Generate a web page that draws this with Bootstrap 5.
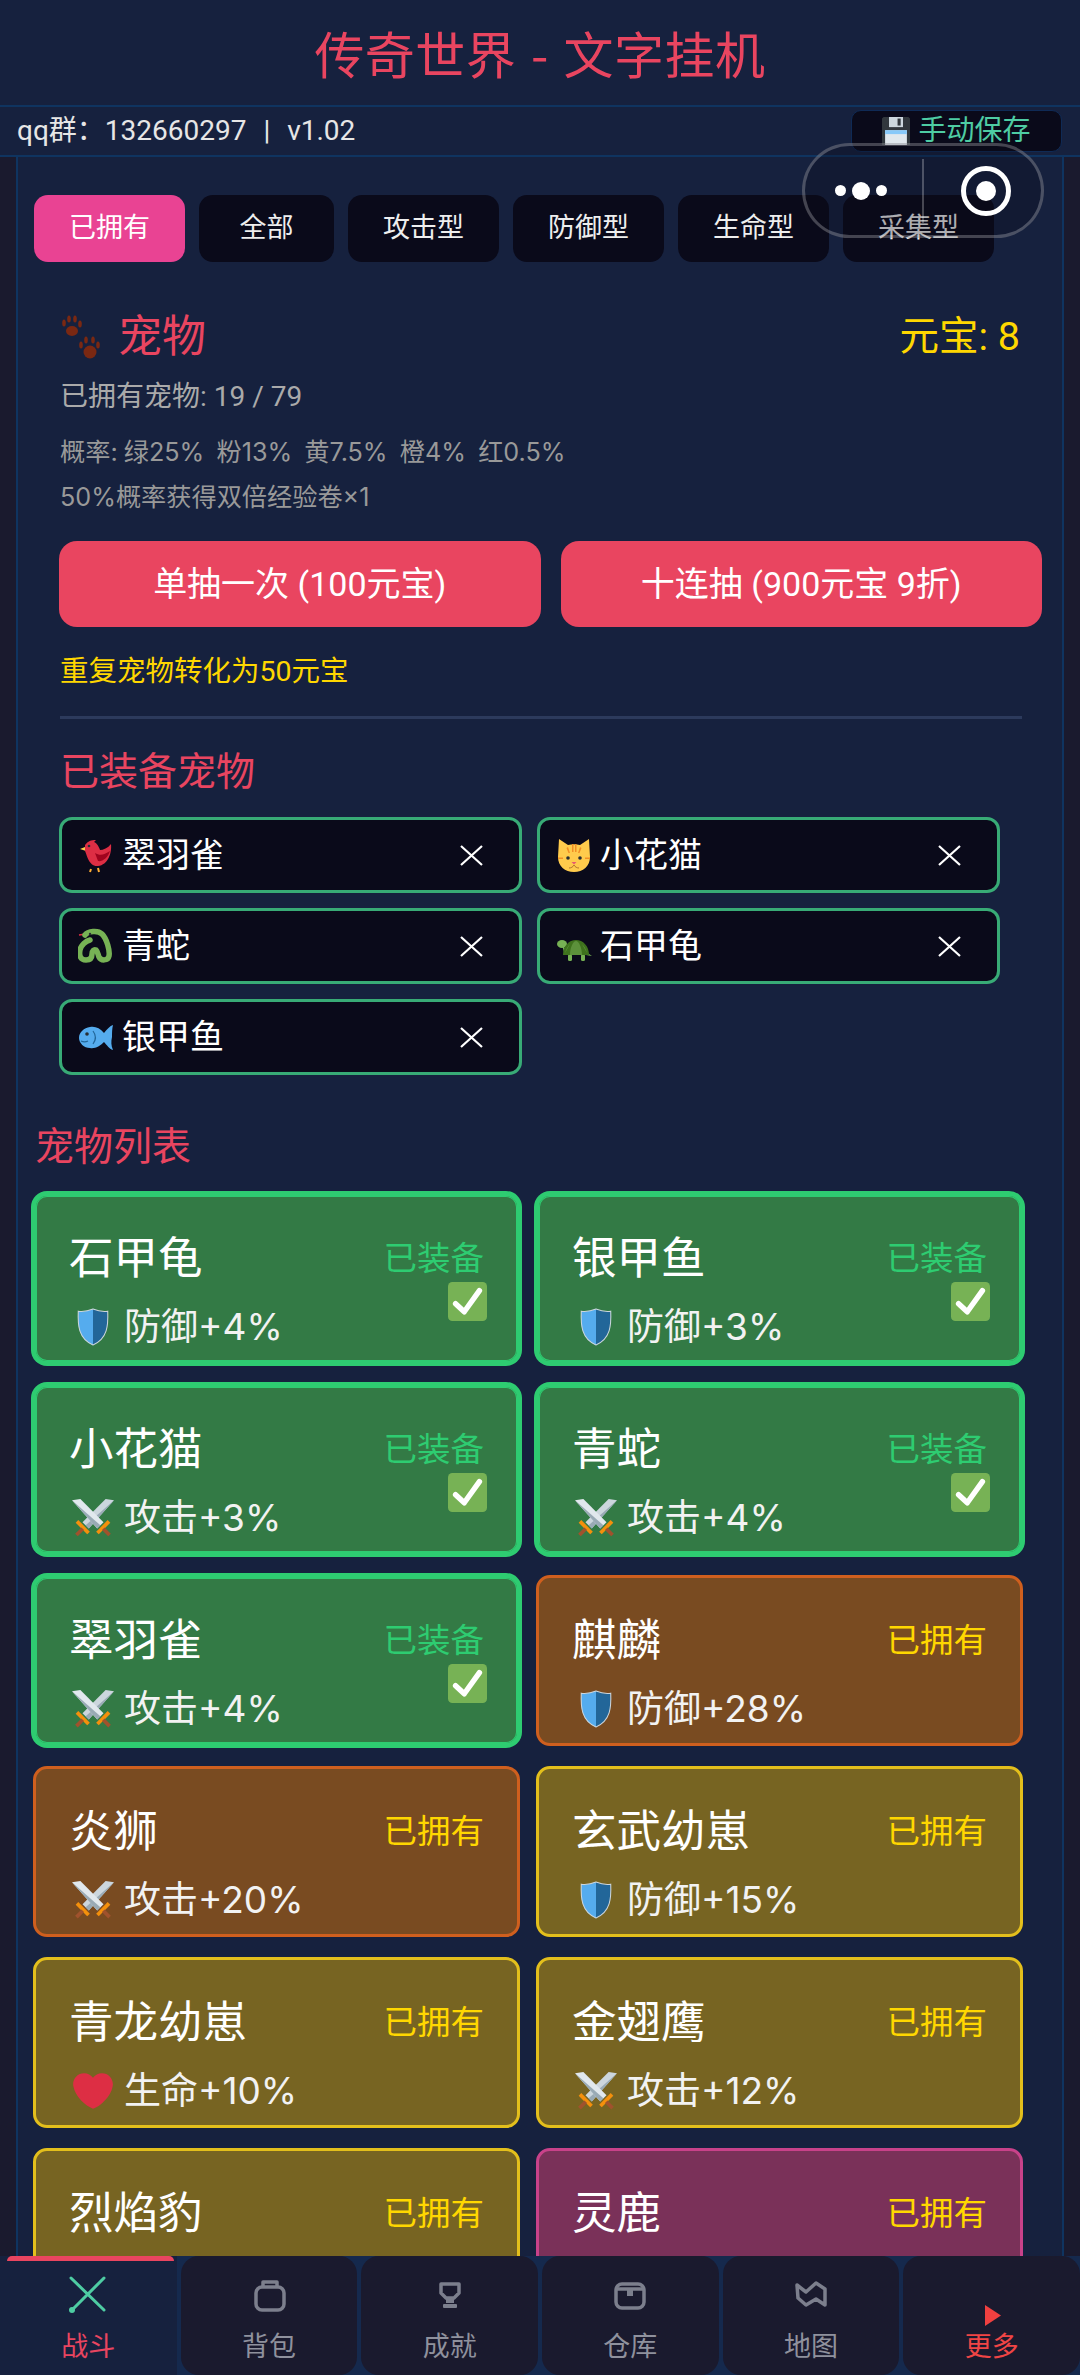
<!DOCTYPE html>
<html lang="zh-CN">
<head>
<meta charset="UTF-8">
<meta name="viewport" content="width=device-width, initial-scale=1.0">
<title>传奇世界 - 文字挂机</title>
<link href="https://cdn.jsdelivr.net/npm/bootstrap@5.3.0/dist/css/bootstrap.min.css" rel="stylesheet">
<style>
body { height: 2375px; background: #1a1a2e; color: #eee; font-family: Roboto, "Noto Sans CJK SC", sans-serif; position: relative; }

.game-title { height: 105px; margin: 0; background: #16213e; color: #e94560; font-size: 50px; font-weight: 400; line-height: 105px; letter-spacing: .5px; word-spacing: 3px; text-align: center; font-family: "Noto Sans CJK SC", sans-serif; }
.info-bar { height: 52px; padding: 2px 18px 2px 17px; background: #16213e; border-top: 2px solid #0f3460; border-bottom: 2px solid #0f3460; font-size: 28px; word-spacing: 10px; color: #e6e6e6; }
.save-btn { width: 211px; height: 42px; padding: 0; background: #0a0a1a; border: 1px solid #0f2a55; border-radius: 10px; color: #4ecca3; font-size: 28px; }
.save-btn svg { width: 28px; height: 28px; }

.game-main { margin: 0 16px; padding: 38px 16px 0; background: #16213e; border-left: 2px solid #0f3460; border-right: 2px solid #0f3460; min-height: 0; }
.tab-row { gap: 14px; }
.pet-tab { min-width: 135px; height: 67px; padding: 0 35px; background: #0a0a1a; border: 0; border-radius: 14px; color: #eee; font-size: 27px; }
.pet-tab.picked { background: #e94393; color: #fff; }

.gacha-box { padding-left: 26px; margin-top: 50px; }
.gacha-head { height: 50px; width: 962px; }
.gacha-title { color: #e94560; font-size: 44px; line-height: 50px; }
.gacha-title svg { width: 44px; height: 46px; margin-right: 14px; }
.gold-text { color: #ffd700; font-size: 39.500px; line-height: 50px; margin-right: 2px; }
.owned-count { margin-top: 15px; font-size: 28px; line-height: 40px; color: #aaa; }
.rate-text { margin-top: 13px; font-family: Inter, "Noto Sans CJK SC", sans-serif; font-size: 25.200px; line-height: 45px; word-spacing: -1px; color: #999; }
.draw-row { margin: 21px 0 0 -1px; width: 983px; gap: 20px; }
.draw-btn { height: 86px; background: #e94560; border: 0; border-radius: 18px; color: #fff; font-size: 34px; padding: 0; }
.dup-note { margin-top: 25px; color: #ffd700; font-size: 28.500px; line-height: 40px; }
.gacha-line { width: 962px; height: 3px; margin: 24px 0 0; border: 0; background: #2c3a5c; opacity: 1; }
.sec-title { color: #e94560; font-size: 39px; line-height: 50px; margin: 0; font-weight: 400; }
.gacha-box .sec-title { margin-top: 28px; }
.equip-grid { display: grid; grid-template-columns: 463px 463px; gap: 15px; margin: 20px 0 0 -1px; }
.equip-chip { height: 76px; padding: 0 36px 0 16px; background: #0a0a1a; border: 3px solid #38ab76; border-radius: 13px; font-size: 34px; color: #fff; }
.equip-chip svg { width: 36px; height: 36px; margin-right: 8px; }
.equip-chip .chip-x { width: 23px; height: 21px; margin: 0 0 0 auto; }

.list-title { margin: 47px 0 0 1px; }
.pet-grid { display: grid; grid-template-columns: 487px 487px; gap: 20px 16px; margin: 21px 0 0 -1px; }
.pet-item { height: 171px; padding: 38px 33px 0 33px; border: 3px solid; border-radius: 14px; }
.pet-name { font-size: 44.500px; line-height: 50px; color: #fff; }
.pet-stat { margin-top: 18px; font-family: Inter, "Noto Sans CJK SC", sans-serif; font-size: 37px; line-height: 50px; color: #f2f2f2; }
.pet-stat svg { width: 42px; height: 40px; margin: 0 10px 0 3px; }
.pet-state { font-size: 33.500px; line-height: 50px; text-align: right; color: #ffd700; }
.pet-check { display: block; width: 39px; height: 39px; margin: -2px -3px 0 auto; }
.pet-on { background: #337a45; border-color: #2ecc71; box-shadow: 0 0 0 2px #2ecc71, inset 0 0 0 1px #2ecc71; }
.pet-on .pet-state { color: #2ecc71; }
.pet-orange { background: #794b21; border-color: #cf5f1e; }
.pet-yellow { background: #776422; border-color: #e3bf1c; }
.pet-pink { background: #7a3159; border-color: #c8428a; }

.bottom-tabs { height: 119px; gap: 4px; background: #15294d; flex-shrink: 0; }
.bottom-tab { flex: 1 1 0; background: #1a1a2e; border-radius: 18px; padding-top: 19px; color: #8f919d; font-size: 27px; line-height: 34px; text-align: center; }
.bottom-tab svg { display: block; width: 40px; height: 55px; margin: 0 auto; }
.bottom-tab.on { background: #16213e; padding-top: 0; color: #e94560; border-radius: 0; }
.bottom-tab.on .tab-bar { height: 5px; margin: 0 3px 14px 7px; background: #e94560; border-radius: 16px 16px 0 0; }
.bottom-tab.more { color: #f04545; }
.tab-ico { fill: none; stroke: #7c7f8d; stroke-width: 3.500; stroke-linejoin: round; }

.mp-capsule { position: absolute; left: 802px; top: 143px; width: 242px; height: 95px; border: 3px solid rgba(255,255,255,.24); border-radius: 48px; background: rgba(10,10,26,.28); }
.mp-dots { width: 117px; padding-left: 30px; gap: 6px; }
.mp-dot { width: 11px; height: 11px; background: #fff; border-radius: 50%; }
.mp-dot.big { width: 18px; height: 18px; }
.mp-split { width: 2px; height: 64px; background: rgba(255,255,255,.25); }
.mp-ring { width: 50px; height: 50px; margin-left: 37px; border: 5px solid #fff; border-radius: 50%; }
.mp-ring span { width: 20px; height: 20px; background: #fff; border-radius: 50%; }
</style>
</head>
<body class="d-flex flex-column overflow-hidden">

<svg class="d-none">
  <symbol id="e-shield" viewBox="3 1 34 38">
    <path d="M20 3C15 5 10 5.500 6 5c-.5 13 0 26 14 32z" fill="#55acee"/>
    <path d="M20 3c5 2 10 2.500 14 2 .5 13 0 26-14 32z" fill="#226699"/>
    <path d="M20 3C15 5 10 5.500 6 5c-.5 13 0 26 14 32 14-6 14.500-19 14-32-4 .5-9 0-14-2z" fill="none" stroke="#ccd6dd" stroke-width="1"/>
  </symbol>
  <symbol id="e-swords" viewBox="0 0 40 36">
    <path d="M40 1l-8-1L10 22l6 6z" fill="#ccd6dd"/><path d="M40 1L13 25l3 3z" fill="#99aab5"/>
    <path d="M0 1l8-1 22 22-6 6z" fill="#e1e8ed"/><path d="M0 1l27 24-3 3z" fill="#99aab5"/>
    <path d="M6 20l11 11-2.500 2.500-11-11z" fill="#f4900c"/><path d="M9 27l-6 6 2.500 2.500 6-6z" fill="#a0522d"/>
    <path d="M34 20L23 31l2.500 2.500 11-11z" fill="#f4900c"/><path d="M31 27l6 6-2.500 2.500-6-6z" fill="#a0522d"/>
  </symbol>
  <symbol id="e-heart" viewBox="0 0 36 36">
    <path d="M35.900 11.800c0-5.450-4.400-9.870-9.870-9.870-3.300 0-6.230 1.630-8.030 4.130-1.790-2.500-4.710-4.130-8.020-4.130C4.540 1.930.120 6.350.120 11.800c0 .77.100 1.520.27 2.240C1.750 22.590 11.220 31.570 18 34.030c6.780-2.460 16.250-11.440 17.620-19.960.17-.72.280-1.470.28-2.270z" fill="#dd2e44"/>
  </symbol>
  <symbol id="e-check" viewBox="0 0 36 36">
    <rect width="36" height="36" rx="4" fill="#77b255"/>
    <path d="M7 20l8 7.500L29 8" fill="none" stroke="#fff" stroke-width="5" stroke-linecap="round" stroke-linejoin="round"/>
  </symbol>
  <symbol id="e-paw" viewBox="0 0 44 46">
    <g fill="#7a2812">
      <ellipse cx="12" cy="17" rx="6" ry="5"/><ellipse cx="4" cy="9" rx="1.800" ry="3.500"/><ellipse cx="9" cy="5" rx="1.800" ry="3.500"/><ellipse cx="15" cy="5" rx="1.800" ry="3.500"/><ellipse cx="20" cy="10" rx="1.800" ry="3.500"/>
      <ellipse cx="30" cy="38" rx="6.500" ry="6.500"/><ellipse cx="21" cy="31" rx="1.800" ry="3.500"/><ellipse cx="26" cy="26" rx="1.800" ry="3.500"/><ellipse cx="33" cy="26" rx="1.800" ry="3.500"/><ellipse cx="38" cy="31" rx="1.800" ry="3.500"/>
    </g>
  </symbol>
  <symbol id="e-floppy" viewBox="0 0 36 36">
    <path d="M2 0h32l2 2v34H0V2z" fill="#31373d"/>
    <rect x="9" y="0" width="18" height="13" fill="#ccd6dd"/><rect x="20" y="2" width="4" height="9" fill="#31373d"/>
    <rect x="4" y="17" width="28" height="19" fill="#e1e8ed"/><rect x="4" y="17" width="28" height="5" fill="#88c9f9"/>
  </symbol>
  <symbol id="e-bird" viewBox="0 0 36 36">
    <path d="M13 32l-1 3M20 31l1 4" stroke="#ffac33" stroke-width="2"/>
    <path d="M2 12l5-2 1 4z" fill="#ffcc4d"/>
    <path d="M7 8c3-4 6-5 11-5l-2 2c3 1 5 5 6 8 3 0 8-2 11-6 1 9-3 21-13 22C11 30 9 18 7 14z" fill="#dd2e44"/>
    <path d="M17 16c5 3 9 2 15-2-2 7-8 11-12 10z" fill="#a0041e"/>
    <circle cx="11" cy="9" r="1.300" fill="#292f33"/>
  </symbol>
  <symbol id="e-cat" viewBox="0 0 36 36">
    <path d="M3 2l9 6c4-1 8-1 12 0l9-6 1 18c0 9-7 15-16 15S2 29 2 20z" fill="#ffcb4c"/>
    <path d="M16 7h1.500v8H16zM19 7h1.500v8H19zM7 22H2v-1.500h5zM34 22h-5v-1.500h5z" fill="#f18f26"/>
    <path d="M12 10l2 6h-1.500l-2-5zM24 10l-2 6h1.500l2-5z" fill="#f18f26"/>
    <circle cx="12" cy="21" r="1.800" fill="#292f33"/><circle cx="24" cy="21" r="1.800" fill="#292f33"/>
    <path d="M15.500 25h5L18 27.500z" fill="#e75a70"/>
    <path d="M13 31c2 0 4-1 5-3 1 2 3 3 5 3" fill="none" stroke="#b2752a" stroke-width="1"/>
  </symbol>
  <symbol id="e-snake" viewBox="0 0 36 36">
    <path d="M1 7l7-1" stroke="#dd2e44" stroke-width="1.500"/>
    <path d="M7 7c3-4 13-5 17-1 5 5 8 17 7 22-1 5-8 5-10 1-1-2-1-5-3-7-2-1-4 1-4 4 0 4-2 6-6 6-6 0-7-5-6-10 1-5 6-9 10-10" fill="none" stroke="#77b255" stroke-width="5.500" stroke-linecap="round"/>
    <circle cx="12" cy="6" r="1.200" fill="#292f33"/>
  </symbol>
  <symbol id="e-turtle" viewBox="0 0 36 36">
    <rect x="12" y="26" width="4" height="7" rx="1.500" fill="#77b255"/><rect x="25" y="26" width="4" height="7" rx="1.500" fill="#77b255"/>
    <path d="M30 27l6 1-6-4z" fill="#77b255"/>
    <ellipse cx="6" cy="16" rx="5" ry="4" fill="#77b255"/><path d="M6 17l6 7h-4z" fill="#77b255"/>
    <path d="M7 27c0-9 6-15 13-15s13 6 13 15z" fill="#3e721d"/>
    <path d="M14 27c0-7 3-14 6-14s6 7 6 14zM9 25c1-4 3-7 5-9M31 25c-1-4-3-7-5-9" fill="#5c913b"/>
  </symbol>
  <symbol id="e-fish" viewBox="0 0 36 36">
    <path d="M35 6c-3 1-6 4-9 8-4-5-9-7-14-6C6 9 1 13 1 19c0 5 5 10 11 10 5 1 10-2 14-6 3 3 5 7 9 8-2-4-2-9-1-13 0-4 0-8 1-12z" fill="#55acee"/>
    <circle cx="9" cy="15" r="1.800" fill="#292f33"/>
    <path d="M15 12c3 4 3 9 0 13M3 22c2 1 5 1 7 0" fill="none" stroke="#226699" stroke-width="1.200"/>
  </symbol>
  <symbol id="e-x" viewBox="0 0 23 21">
    <path d="M1 1l21 19M22 1L1 20" stroke="#fff" stroke-width="2.200" fill="none"/>
  </symbol>
</svg>

<h1 class="game-title flex-shrink-0">传奇世界 - 文字挂机</h1>

<div class="info-bar d-flex justify-content-between align-items-center flex-shrink-0">
  <span>qq群：132660297 | v1.02</span>
  <button type="button" class="save-btn btn d-flex align-items-center justify-content-center gap-2"><svg><use href="#e-floppy"/></svg>手动保存</button>
</div>

<main class="game-main flex-grow-1 overflow-hidden">
  <div class="d-flex tab-row">
    <button type="button" class="btn pet-tab picked">已拥有</button>
    <button type="button" class="btn pet-tab">全部</button>
    <button type="button" class="btn pet-tab">攻击型</button>
    <button type="button" class="btn pet-tab">防御型</button>
    <button type="button" class="btn pet-tab">生命型</button>
    <button type="button" class="btn pet-tab">采集型</button>
  </div>

  <section class="gacha-box">
    <div class="gacha-head d-flex justify-content-between align-items-center">
      <div class="gacha-title d-flex align-items-center"><svg><use href="#e-paw"/></svg>宠物</div>
      <div class="gold-text">元宝: 8</div>
    </div>
    <div class="owned-count">已拥有宠物: 19 / 79</div>
    <div class="rate-text">概率: 绿25%&nbsp; 粉13%&nbsp; 黄7.5%&nbsp; 橙4%&nbsp; 红0.5%<br>50%概率获得双倍经验卷×1</div>
    <div class="draw-row d-flex">
      <button type="button" class="btn draw-btn flex-fill w-50">单抽一次 (100元宝)</button>
      <button type="button" class="btn draw-btn flex-fill w-50">十连抽 (900元宝 9折)</button>
    </div>
    <div class="dup-note">重复宠物转化为50元宝</div>
    <hr class="gacha-line">
    <h2 class="sec-title">已装备宠物</h2>
    <div class="equip-grid">
      <div class="equip-chip d-flex align-items-center"><svg><use href="#e-bird"/></svg>翠羽雀<svg class="chip-x"><use href="#e-x"/></svg></div>
      <div class="equip-chip d-flex align-items-center"><svg><use href="#e-cat"/></svg>小花猫<svg class="chip-x"><use href="#e-x"/></svg></div>
      <div class="equip-chip d-flex align-items-center"><svg><use href="#e-snake"/></svg>青蛇<svg class="chip-x"><use href="#e-x"/></svg></div>
      <div class="equip-chip d-flex align-items-center"><svg><use href="#e-turtle"/></svg>石甲龟<svg class="chip-x"><use href="#e-x"/></svg></div>
      <div class="equip-chip d-flex align-items-center"><svg><use href="#e-fish"/></svg>银甲鱼<svg class="chip-x"><use href="#e-x"/></svg></div>
    </div>
  </section>

  <h2 class="sec-title list-title">宠物列表</h2>
  <div class="pet-grid">
    <div class="pet-item pet-on d-flex justify-content-between">
      <div><div class="pet-name">石甲龟</div><div class="pet-stat d-flex align-items-center"><svg><use href="#e-shield"/></svg>防御+4%</div></div>
      <div><div class="pet-state">已装备</div><svg class="pet-check"><use href="#e-check"/></svg></div>
    </div>
    <div class="pet-item pet-on d-flex justify-content-between">
      <div><div class="pet-name">银甲鱼</div><div class="pet-stat d-flex align-items-center"><svg><use href="#e-shield"/></svg>防御+3%</div></div>
      <div><div class="pet-state">已装备</div><svg class="pet-check"><use href="#e-check"/></svg></div>
    </div>
    <div class="pet-item pet-on d-flex justify-content-between">
      <div><div class="pet-name">小花猫</div><div class="pet-stat d-flex align-items-center"><svg><use href="#e-swords"/></svg>攻击+3%</div></div>
      <div><div class="pet-state">已装备</div><svg class="pet-check"><use href="#e-check"/></svg></div>
    </div>
    <div class="pet-item pet-on d-flex justify-content-between">
      <div><div class="pet-name">青蛇</div><div class="pet-stat d-flex align-items-center"><svg><use href="#e-swords"/></svg>攻击+4%</div></div>
      <div><div class="pet-state">已装备</div><svg class="pet-check"><use href="#e-check"/></svg></div>
    </div>
    <div class="pet-item pet-on d-flex justify-content-between">
      <div><div class="pet-name">翠羽雀</div><div class="pet-stat d-flex align-items-center"><svg><use href="#e-swords"/></svg>攻击+4%</div></div>
      <div><div class="pet-state">已装备</div><svg class="pet-check"><use href="#e-check"/></svg></div>
    </div>
    <div class="pet-item pet-orange d-flex justify-content-between">
      <div><div class="pet-name">麒麟</div><div class="pet-stat d-flex align-items-center"><svg><use href="#e-shield"/></svg>防御+28%</div></div>
      <div class="pet-state">已拥有</div>
    </div>
    <div class="pet-item pet-orange d-flex justify-content-between">
      <div><div class="pet-name">炎狮</div><div class="pet-stat d-flex align-items-center"><svg><use href="#e-swords"/></svg>攻击+20%</div></div>
      <div class="pet-state">已拥有</div>
    </div>
    <div class="pet-item pet-yellow d-flex justify-content-between">
      <div><div class="pet-name">玄武幼崽</div><div class="pet-stat d-flex align-items-center"><svg><use href="#e-shield"/></svg>防御+15%</div></div>
      <div class="pet-state">已拥有</div>
    </div>
    <div class="pet-item pet-yellow d-flex justify-content-between">
      <div><div class="pet-name">青龙幼崽</div><div class="pet-stat d-flex align-items-center"><svg><use href="#e-heart"/></svg>生命+10%</div></div>
      <div class="pet-state">已拥有</div>
    </div>
    <div class="pet-item pet-yellow d-flex justify-content-between">
      <div><div class="pet-name">金翅鹰</div><div class="pet-stat d-flex align-items-center"><svg><use href="#e-swords"/></svg>攻击+12%</div></div>
      <div class="pet-state">已拥有</div>
    </div>
    <div class="pet-item pet-yellow d-flex justify-content-between">
      <div class="pet-name">烈焰豹</div>
      <div class="pet-state">已拥有</div>
    </div>
    <div class="pet-item pet-pink d-flex justify-content-between">
      <div class="pet-name">灵鹿</div>
      <div class="pet-state">已拥有</div>
    </div>
  </div>
</main>

<nav class="bottom-tabs d-flex">
  <div class="bottom-tab on">
    <div class="tab-bar"></div>
    <svg viewBox="0 0 40 55"><path d="M3 3l33 32M36 3L4 35" stroke="#4ecca3" stroke-width="3" fill="none" stroke-linecap="round"/><circle cx="4" cy="35" r="3" fill="#4ecca3"/></svg>
    战斗
  </div>
  <div class="bottom-tab">
    <svg viewBox="0 0 40 55"><rect class="tab-ico" x="7" y="12" width="28" height="23" rx="6"/><path class="tab-ico" d="M14 12V7h14v5"/></svg>
    背包
  </div>
  <div class="bottom-tab">
    <svg viewBox="0 0 40 55"><path class="tab-ico" d="M11 9h18v9l-5 5h-8l-5-5z"/><rect x="16" y="23" width="8" height="5" fill="#7c7f8d"/><rect x="13" y="29" width="14" height="4" rx="1" fill="#7c7f8d"/></svg>
    成就
  </div>
  <div class="bottom-tab">
    <svg viewBox="0 0 40 55"><rect class="tab-ico" x="6" y="9" width="28" height="24" rx="6"/><path class="tab-ico" d="M6 14h28"/><rect x="17" y="15" width="6" height="6" fill="#7c7f8d"/></svg>
    仓库
  </div>
  <div class="bottom-tab">
    <svg viewBox="0 0 40 55"><path class="tab-ico" d="M6 10l9 7 10-9 9 6v16l-9-6-10 6-8-7z"/></svg>
    地图
  </div>
  <div class="bottom-tab more">
    <svg viewBox="0 0 40 55"><path d="M13 30l16 10.500L13 51z" fill="#f04040"/></svg>
    更多
  </div>
</nav>

<div class="mp-capsule d-flex align-items-center">
  <div class="mp-dots d-flex align-items-center"><span class="mp-dot"></span><span class="mp-dot big"></span><span class="mp-dot"></span></div>
  <span class="mp-split"></span>
  <div class="mp-ring d-flex align-items-center justify-content-center"><span></span></div>
</div>

<script src="https://cdn.jsdelivr.net/npm/bootstrap@5.3.0/dist/js/bootstrap.bundle.min.js"></script>
</body>
</html>
